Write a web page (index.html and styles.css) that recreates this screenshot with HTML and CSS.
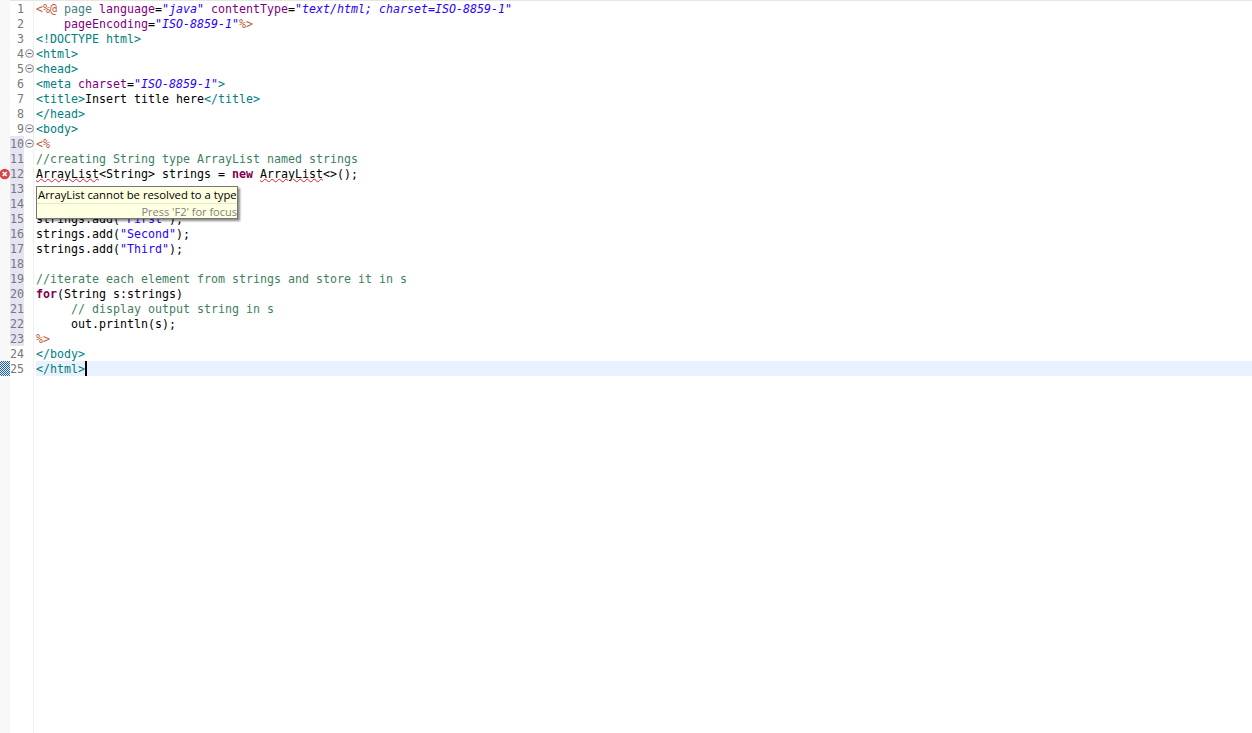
FILE: index.html
```html
<!DOCTYPE html>
<html lang="en">
<head>
<meta charset="utf-8">
<title>Editor</title>
<link rel="stylesheet" href="styles.css">
</head>
<body>
<main class="editor">
  <div class="ruler">
    <div class="slot"></div><div class="slot"></div><div class="slot"></div><div class="slot"></div><div class="slot"></div>
    <div class="slot"></div><div class="slot"></div><div class="slot"></div><div class="slot"></div><div class="slot"></div>
    <div class="slot"></div>
    <div class="slot"><svg class="err" width="10" height="12" viewBox="0 0 10 12"><circle cx="4.7" cy="6" r="5.2" fill="#d8434a"/><path d="M2.7 4l4 4M6.7 4l-4 4" stroke="#fff" stroke-width="1.7"/></svg></div>
    <div class="slot"></div><div class="slot"></div><div class="slot"></div><div class="slot"></div><div class="slot"></div>
    <div class="slot"></div><div class="slot"></div><div class="slot"></div><div class="slot"></div><div class="slot"></div>
    <div class="slot"></div><div class="slot"></div>
    <div class="slot hatch"></div>
  </div>
  <div class="gutter">
    <div class="num">1</div>
    <div class="num">2</div>
    <div class="num">3</div>
    <div class="num fold">4<svg class="foldicon" width="9" height="9" viewBox="0 0 9 9"><circle cx="4.5" cy="4.5" r="3.9" fill="#f4f4f6" stroke="#8c8c98"/><path d="M2.5 4.5h4" stroke="#5e5e6a"/></svg></div>
    <div class="num fold">5<svg class="foldicon" width="9" height="9" viewBox="0 0 9 9"><circle cx="4.5" cy="4.5" r="3.9" fill="#f4f4f6" stroke="#8c8c98"/><path d="M2.5 4.5h4" stroke="#5e5e6a"/></svg></div>
    <div class="num">6</div>
    <div class="num">7</div>
    <div class="num">8</div>
    <div class="num fold">9<svg class="foldicon" width="9" height="9" viewBox="0 0 9 9"><circle cx="4.5" cy="4.5" r="3.9" fill="#f4f4f6" stroke="#8c8c98"/><path d="M2.5 4.5h4" stroke="#5e5e6a"/></svg></div>
    <div class="num fold"><span class="mk">10</span><svg class="foldicon" width="9" height="9" viewBox="0 0 9 9"><circle cx="4.5" cy="4.5" r="3.9" fill="#f4f4f6" stroke="#8c8c98"/><path d="M2.5 4.5h4" stroke="#5e5e6a"/></svg></div>
    <div class="num"><span class="mk">11</span></div>
    <div class="num"><span class="mk">12</span></div>
    <div class="num"><span class="mk">13</span></div>
    <div class="num"><span class="mk">14</span></div>
    <div class="num"><span class="mk">15</span></div>
    <div class="num"><span class="mk">16</span></div>
    <div class="num"><span class="mk">17</span></div>
    <div class="num"><span class="mk">18</span></div>
    <div class="num"><span class="mk">19</span></div>
    <div class="num"><span class="mk">20</span></div>
    <div class="num"><span class="mk">21</span></div>
    <div class="num"><span class="mk">22</span></div>
    <div class="num"><span class="mk">23</span></div>
    <div class="num">24</div>
    <div class="num">25</div>
  </div>
  <div class="code">
    <div class="line"><span class="jsp">&lt;%@</span> <span class="tn">page</span> <span class="an">language</span>=<span class="av">"java"</span> <span class="an">contentType</span>=<span class="av">"text/html; charset=ISO-8859-1"</span></div>
    <div class="line">    <span class="an">pageEncoding</span>=<span class="av">"ISO-8859-1"</span><span class="jsp">%&gt;</span></div>
    <div class="line"><span class="tg">&lt;!DOCTYPE html&gt;</span></div>
    <div class="line"><span class="tg">&lt;html&gt;</span></div>
    <div class="line"><span class="tg">&lt;head&gt;</span></div>
    <div class="line"><span class="tg">&lt;meta</span> <span class="an">charset</span>=<span class="av">"ISO-8859-1"</span><span class="tg">&gt;</span></div>
    <div class="line"><span class="tg">&lt;title&gt;</span>Insert title here<span class="tg">&lt;/title&gt;</span></div>
    <div class="line"><span class="tg">&lt;/head&gt;</span></div>
    <div class="line"><span class="tg">&lt;body&gt;</span></div>
    <div class="line"><span class="jsp">&lt;%</span></div>
    <div class="line"><span class="cm">//creating String type ArrayList named strings</span></div>
    <div class="line"><span class="sq">ArrayList</span>&lt;String&gt; strings = <span class="kw">new</span> <span class="sq">ArrayList</span>&lt;&gt;();</div>
    <div class="line"></div>
    <div class="line"></div>
    <div class="line">strings.add(<span class="st">"First"</span>);</div>
    <div class="line">strings.add(<span class="st">"Second"</span>);</div>
    <div class="line">strings.add(<span class="st">"Third"</span>);</div>
    <div class="line"></div>
    <div class="line"><span class="cm">//iterate each element from strings and store it in s</span></div>
    <div class="line"><span class="kw">for</span>(String s:strings)</div>
    <div class="line">     <span class="cm">// display output string in s</span></div>
    <div class="line">     out.println(s);</div>
    <div class="line"><span class="jsp">%&gt;</span></div>
    <div class="line"><span class="tg">&lt;/body&gt;</span></div>
    <div class="line current"><span class="tg">&lt;/html&gt;</span><span class="caret"></span></div>
  </div>
  <div class="tip">
    <div class="tip-msg">ArrayList cannot be resolved to a type</div>
    <div class="tip-foot">Press 'F2' for focus</div>
  </div>
</main>
</body>
</html>
```

FILE: styles.css
```css
html, body {
  margin: 0;
  padding: 0;
  height: 100%;
  background: #fff;
  overflow: hidden;
}

.editor {
  position: relative;
  display: flex;
  height: 733px;
  box-sizing: border-box;
  padding-top: 1px;
  font-family: "DejaVu Sans Mono", monospace;
  font-size: 11.63px;
  color: #000;
  background: linear-gradient(#e6e6e6, #e6e6e6) top / 100% 1px no-repeat #fff;
}

.ruler {
  flex: 0 0 10px;
  margin-top: -1px;
  padding-top: 1px;
  background: #f8f8f8;
}

.slot {
  height: 15px;
  position: relative;
}

.err {
  display: block;
  padding-top: 2px;
}

.hatch {
  background: repeating-conic-gradient(#1f5fa8 0 25%, #e8f0f8 0 50%) 0 0 / 2px 2px;
}

.gutter {
  flex: 0 0 24px;
  color: #787878;
}

.num {
  position: relative;
  height: 15px;
  line-height: 17px;
  width: 14px;
  text-align: right;
}

.mk {
  display: block;
  height: 15px;
  background: #e4e4f2;
}

.foldicon {
  position: absolute;
  left: 15px;
  top: 3px;
}

.code {
  flex: 1;
  margin-top: -1px;
  padding-top: 1px;
  border-left: 1px solid #f0f0f0;
  padding-left: 2px;
  margin-left: -1px;
  min-width: 0;
}

.line {
  height: 15px;
  line-height: 17px;
  white-space: pre;
}

.current {
  background: #e8f2fe;
}

.caret {
  display: inline-block;
  width: 2px;
  height: 15px;
  background: #000;
  vertical-align: top;
}

.jsp { color: #bf5f3f; }
.tn { color: #3f7f7f; }
.tg { color: #008080; }
.an { color: #7f007f; }
.av { color: #2a00ff; font-style: italic; }
.cm { color: #3f7f5f; }
.kw { color: #7f0055; font-weight: bold; }
.st { color: #2a00ff; }
.sq { text-decoration: underline wavy #e8212a 1px; text-underline-offset: 0; }

.tip {
  position: absolute;
  left: 36px;
  top: 186px;
  width: 202px;
  height: 33px;
  box-sizing: border-box;
  border: 1px solid #767676;
  background: #ffffe1;
  box-shadow: 2px 2px 2px rgba(0, 0, 0, 0.45);
  font-family: "Open Sans", sans-serif;
  white-space: nowrap;
}

.tip-msg {
  height: 16px;
  line-height: 16px;
  padding-left: 1px;
  font-size: 11.3px;
  color: #000;
}

.tip-foot {
  height: 15px;
  line-height: 15px;
  text-align: right;
  font-size: 11px;
  color: #7f7f7f;
  border-top: 1px solid #e6e6c8;
}
```
